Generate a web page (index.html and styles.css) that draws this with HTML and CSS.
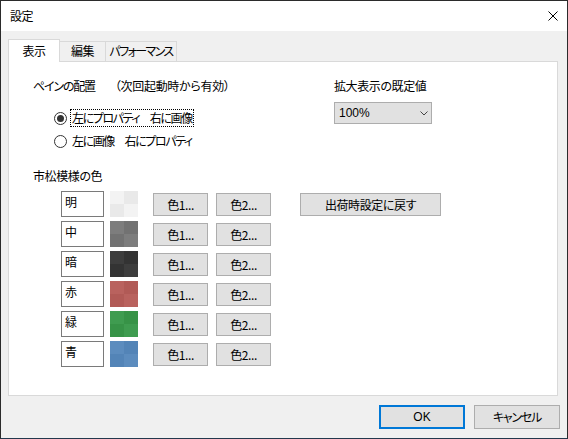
FILE: index.html
```html
<!DOCTYPE html>
<html lang="ja">
<head>
<meta charset="utf-8">
<title>設定</title>
<link rel="stylesheet" href="styles.css">
</head>
<body>
<div class="window">
  <div class="titlebar">
    <span class="title">設定</span>
    <svg class="close" width="10" height="10" viewBox="0 0 10 10"><path d="M0.5 0.5L9.5 9.5M9.5 0.5L0.5 9.5" stroke="#000" stroke-width="1" fill="none"/></svg>
  </div>
  <div class="client">
    <div class="tabs">
      <div class="tab active">表示</div>
      <div class="tab">編集</div>
      <div class="tab kana tight">パフォーマンス</div>
    </div>
    <div class="panel">
      <div class="top">
        <div class="pane-group">
          <div class="label"><span class="kana">ペインの配置</span><span class="note">（次回起動時から有効）</span></div>
          <div class="radio first"><span class="circle checked"></span><span class="rtext focus">左にプロパティ　右に画像</span></div>
          <div class="radio"><span class="circle"></span><span class="rtext">左に画像　右にプロパティ</span></div>
        </div>
        <div class="zoom-group">
          <div class="label">拡大表示の既定値</div>
          <div class="select"><span>100%</span><svg class="chev" width="8" height="5" viewBox="0 0 8 5"><path d="M0.5 0.5L4 4L7.5 0.5" stroke="#444" stroke-width="1" fill="none"/></svg></div>
        </div>
      </div>
      <div class="label checker-label">市松模様の色</div>
      <div class="colors">
        <div class="rows">
          <div class="row"><div class="box">明</div><div class="swatch light"><i></i><i></i><i></i><i></i></div><button class="btn c">色1...</button><button class="btn c">色2...</button></div>
          <div class="row"><div class="box">中</div><div class="swatch mid"><i></i><i></i><i></i><i></i></div><button class="btn c">色1...</button><button class="btn c">色2...</button></div>
          <div class="row"><div class="box">暗</div><div class="swatch dark"><i></i><i></i><i></i><i></i></div><button class="btn c">色1...</button><button class="btn c">色2...</button></div>
          <div class="row"><div class="box">赤</div><div class="swatch red"><i></i><i></i><i></i><i></i></div><button class="btn c">色1...</button><button class="btn c">色2...</button></div>
          <div class="row"><div class="box">緑</div><div class="swatch green"><i></i><i></i><i></i><i></i></div><button class="btn c">色1...</button><button class="btn c">色2...</button></div>
          <div class="row"><div class="box">青</div><div class="swatch blue"><i></i><i></i><i></i><i></i></div><button class="btn c">色1...</button><button class="btn c">色2...</button></div>
        </div>
        <button class="btn reset">出荷時設定に戻す</button>
      </div>
    </div>
    <div class="footer">
      <button class="btn dlg ok">OK</button>
      <button class="btn dlg kana">キャンセル</button>
    </div>
  </div>
</div>
</body>
</html>
```

FILE: styles.css
```css
* { box-sizing: border-box; }
html, body { margin: 0; padding: 0; background: #fff; }
body {
  font-family: "Noto Sans CJK JP", "Noto Sans", sans-serif;
  font-size: 12px;
  color: #000;
  font-feature-settings: "palt";
  letter-spacing: -0.4px;
}
.kana { letter-spacing: -1.2px; }
.kana.tight { letter-spacing: -1.6px; }
.window {
  width: 568px;
  height: 439px;
  border: 1px solid #2b2b2b;
  border-bottom-color: #23384d;
  display: flex;
  flex-direction: column;
  background: #f0f0f0;
}
.titlebar {
  height: 30px;
  background: #fff;
  display: flex;
  align-items: center;
  justify-content: space-between;
  padding: 0 9px 0 9px;
}
.title { line-height: 16px; }
.close { display: block; }
.client {
  flex: 1;
  display: flex;
  flex-direction: column;
  padding: 8px 7px 0 7px;
}
.tabs {
  display: flex;
  align-items: flex-end;
  height: 22px;
}
.tab {
  height: 20px;
  line-height: 18px;
  padding: 0;
  border: 1px solid #d9d9d9;
  border-bottom: none;
  border-left: none;
  background: #f0f0f0;
  text-align: center;
  white-space: nowrap;
}
.tab:nth-child(2) { width: 46px; }
.tab:nth-child(3) { width: 71px; }
.tab.active {
  width: 52px;
  height: 23px;
  line-height: 21px;
  border-left: 1px solid #d9d9d9;
  background: #fff;
  margin-bottom: -1px;
  position: relative;
  z-index: 1;
}
.panel {
  width: 550px;
  height: 335px;
  background: #fff;
  border: 1px solid #d9d9d9;
  padding: 16px 0 0 24px;
}
.top { display: flex; }
.pane-group { width: 301px; }
.label { line-height: 16px; height: 16px; white-space: nowrap; }
.note { margin-left: 20px; letter-spacing: -0.3px; }
.radio {
  display: flex;
  align-items: center;
  height: 18px;
  margin-top: 5px;
  padding-left: 21px;
}
.radio.first { margin-top: 15px; }
.circle {
  width: 13px;
  height: 13px;
  border: 1px solid #333;
  border-radius: 50%;
  background: #fff;
  display: flex;
  align-items: center;
  justify-content: center;
  margin-right: 3px;
}
.circle.checked::after {
  content: "";
  width: 7px;
  height: 7px;
  border-radius: 50%;
  background: #333;
}
.rtext {
  line-height: 16px;
  padding: 0 1px;
  border: 1px dotted transparent;
  white-space: nowrap;
  letter-spacing: -1.4px;
}
.rtext.focus { border-color: #000; }
.select {
  margin-top: 8px;
  width: 98px;
  height: 22px;
  background: #e1e1e1;
  border: 1px solid #adadad;
  display: flex;
  align-items: center;
  justify-content: space-between;
  padding: 0 3px 0 4px;
  font-family: "Liberation Sans", "Noto Sans CJK JP", sans-serif;
  letter-spacing: 0;
}
.chev { display: block; }
.checker-label { margin-top: 18px; }
.colors {
  display: flex;
  align-items: flex-start;
  margin-top: 7px;
  padding-left: 28px;
}
.rows { display: flex; flex-direction: column; gap: 4px; }
.row { display: flex; align-items: flex-start; height: 26px; }
.box {
  width: 43px;
  height: 26px;
  border: 1px solid #7a7a7a;
  padding: 2px 0 0 3px;
  line-height: 16px;
  background: #fff;
}
.swatch {
  margin-left: 6px;
  width: 28px;
  height: 26px;
  display: grid;
  grid-template-columns: 14px 14px;
  grid-template-rows: 13px 13px;
}
.swatch i:nth-child(1), .swatch i:nth-child(4) { background: var(--a); }
.swatch i:nth-child(2), .swatch i:nth-child(3) { background: var(--b); }
.light { --a: #f3f3f3; --b: #e9e9e9; }
.mid { --a: #7d7d7d; --b: #727272; }
.dark { --a: #3d3d3d; --b: #333333; }
.red { --a: #b9625e; --b: #b15a56; }
.green { --a: #3f9c50; --b: #379347; }
.blue { --a: #5c8cbe; --b: #5384b7; }
.btn {
  font-family: "Noto Sans CJK JP", "Noto Sans", sans-serif;
  font-feature-settings: "palt";
  font-size: 12px;
  letter-spacing: -0.4px;
  color: #000;
  background: #e1e1e1;
  border: 1px solid #adadad;
  border-radius: 0;
  padding: 0;
  margin: 0;
  line-height: 16px;
}
.btn.kana { letter-spacing: -1.2px; }
.btn.c {
  width: 55px;
  height: 23px;
  margin-top: 2px;
  margin-left: 15px;
}
.btn.c + .btn.c { margin-left: 8px; }
.btn.reset {
  width: 141px;
  height: 23px;
  margin-top: 2px;
  margin-left: 29px;
}
.footer {
  display: flex;
  justify-content: flex-end;
  gap: 9px;
  margin-top: 9px;
}
.btn.dlg { width: 86px; height: 24px; }
.btn.ok { border: 2px solid #0078d7; font-family: "Liberation Sans", sans-serif; letter-spacing: 0; }
```
